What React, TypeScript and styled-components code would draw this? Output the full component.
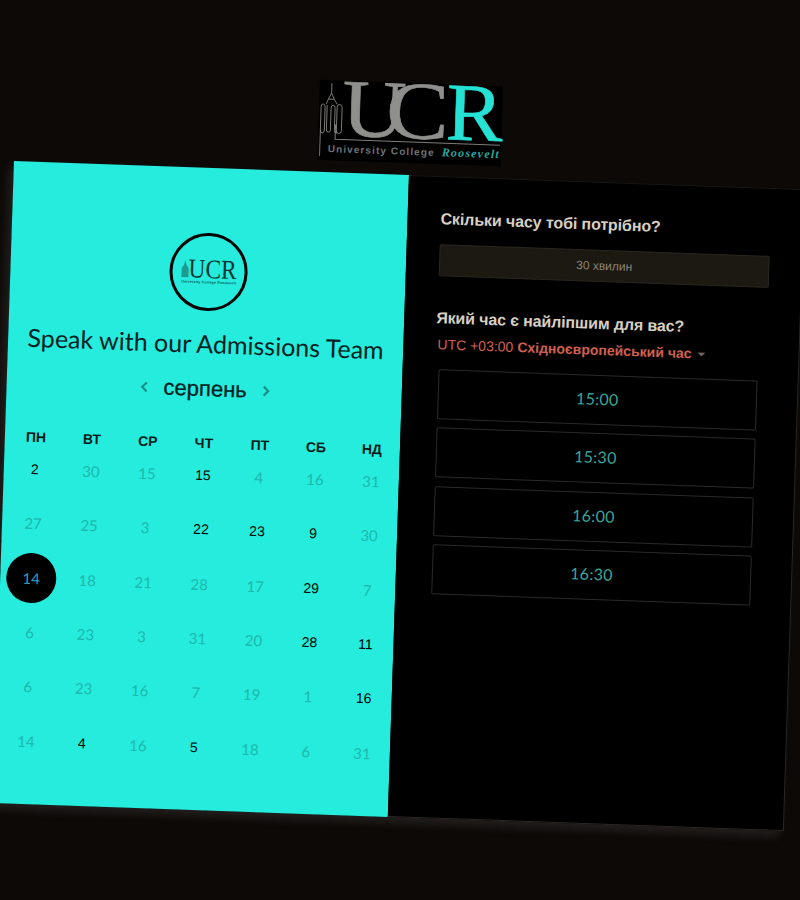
import React from 'react';
import styled, { createGlobalStyle } from 'styled-components';

const GlobalStyle = createGlobalStyle`
  html, body {
    margin: 0;
    padding: 0;
    width: 800px;
    height: 900px;
    overflow: hidden;
    background-color: #0c0906;
  }
`;

// the whole page is photographed slightly askew, so the sheer sits on the page wrapper
const Page = styled.div`
  width: 791px;
  padding-top: 161px;
  position: relative;
  transform-origin: 0 0;
  transform: matrix(1, 0.0355, -0.033, 1, 19.3, 0);
  font-family: 'Liberation Sans', Arial, sans-serif;
`;

const TopLogo = styled.svg`
  position: absolute;
  left: 303px;
  top: 69px;
  width: 183px;
  height: 80px;
  overflow: visible;
`;

const Card = styled.div`
  display: grid;
  grid-template-columns: 395px 396px;
  height: 642px;
  box-shadow: -5px 6px 10px rgba(150, 150, 155, 0.16);
`;

const LeftPanel = styled.section`
  background-color: #25ecdc;
  display: flex;
  flex-direction: column;
  align-items: center;
  padding-top: 65px;
  box-sizing: border-box;
  color: #000;
`;

const Badge = styled.div`
  width: 78px;
  height: 78px;
  box-sizing: border-box;
  border: 3px solid #050505;
  border-radius: 50%;
  display: flex;
  align-items: center;
  justify-content: center;
`;

const BadgeMark = styled.svg`
  width: 58px;
  height: 28px;
  overflow: visible;
`;

const Title = styled.h1`
  margin: 16px 0 0;
  font-family: Lato, 'Open Sans', sans-serif;
  font-weight: 400;
  font-size: 25px;
  line-height: 32px;
  white-space: nowrap;
  color: #06211f;
`;

const MonthRow = styled.div`
  margin: 17px 0 0 2px;
  display: flex;
  align-items: center;
  gap: 14px;
  height: 26px;
`;

const MonthName = styled.div`
  font-size: 22px;
  color: #03211f;
  -webkit-text-stroke: 0.3px #03211f;
`;

const Arrow = styled.svg`
  width: 10px;
  height: 12px;
  fill: none;
  stroke: #1a8f8a;
  stroke-width: 2.2;
`;

const Calendar = styled.div`
  margin: 36px 0 0 3px;
  width: 392px;
  display: grid;
  grid-template-columns: repeat(7, 56px);
  grid-template-rows: 10px repeat(6, 54.3px);
`;

const DayName = styled.div`
  line-height: 10px;
  text-align: center;
  font-size: 14px;
  font-weight: 700;
  color: #061a19;
`;

const Day = styled.div<{ $active?: boolean; $selected?: boolean }>`
  width: 50px;
  height: 50px;
  justify-self: center;
  align-self: center;
  display: flex;
  align-items: center;
  justify-content: center;
  border-radius: 50%;
  font-family: ${(p) => (p.$active ? "'Liberation Sans', Arial" : 'Lato, Roboto')}, sans-serif;
  font-size: ${(p) => (p.$active ? '14px' : '15px')};
  color: ${(p) => (p.$selected ? '#2a9fc0' : p.$active ? '#000' : '#1db8ad')};
  background-color: ${(p) => (p.$selected ? '#000' : 'transparent')};
`;

const RightPanel = styled.section`
  background-color: #000;
  box-sizing: border-box;
  padding: 32px 28px 0 33px;
  border-top: 1px solid #181715;
  border-right: 1px solid #2a2825;
  border-bottom: 1px solid #2a2825;
  display: flex;
  flex-direction: column;
`;

const Question = styled.h2`
  margin: 0;
  font-size: 16px;
  line-height: 20px;
  font-weight: 700;
  letter-spacing: -0.11px;
  color: #d8cfc2;
  white-space: nowrap;
`;

const Duration = styled.div`
  margin-top: 15px;
  height: 32px;
  width: 330px;
  box-sizing: border-box;
  border: 1px solid #2b2620;
  border-radius: 2px;
  background-color: #1c1812;
  color: #8d8579;
  font-size: 12px;
  display: flex;
  align-items: center;
  justify-content: center;
`;

const SecondQuestion = styled(Question)`
  margin-top: 32px;
  margin-left: -1px;
  letter-spacing: -0.14px;
`;

const Zone = styled.div`
  margin: 6px 0 0 1px;
  font-size: 14px;
  line-height: 20px;
  color: #d2604e;
  display: flex;
  align-items: center;
  gap: 4px;
  white-space: nowrap;
`;

const ZoneName = styled.b`
  font-weight: 700;
`;

const Caret = styled.span`
  margin-left: 2px;
  margin-top: 2px;
  border-left: 4px solid transparent;
  border-right: 4px solid transparent;
  border-top: 4px solid #6b655c;
`;

const Slots = styled.div`
  margin: 15px 0 0 3px;
  display: flex;
  flex-direction: column;
  gap: 8.4px;
`;

const Slot = styled.div`
  width: 319px;
  height: 50px;
  box-sizing: border-box;
  padding-bottom: 3px;
  border: 1px solid #2b2a28;
  border-radius: 2px;
  display: flex;
  align-items: center;
  justify-content: center;
  font-family: Lato, Roboto, sans-serif;
  font-size: 16px;
  letter-spacing: 0.3px;
  color: #3aa59b;
`;

type Cell = { n: number; active?: boolean; selected?: boolean };

const a = (n: number): Cell => ({ n, active: true });
const d = (n: number): Cell => ({ n });

const weekDays = ['ПН', 'ВТ', 'СР', 'ЧТ', 'ПТ', 'СБ', 'НД'];

const days: Cell[] = [
  a(2), d(30), d(15), a(15), d(4), d(16), d(31),
  d(27), d(25), d(3), a(22), a(23), a(9), d(30),
  { n: 14, selected: true }, d(18), d(21), d(28), d(17), a(29), d(7),
  d(6), d(23), d(3), d(31), d(20), a(28), a(11),
  d(6), d(23), d(16), d(7), d(19), d(1), a(16),
  d(14), a(4), d(16), a(5), d(18), d(6), d(31),
];

const slots = ['15:00', '15:30', '16:00', '16:30'];

const Tower: React.FC = () => (
  <g fill="none" stroke="#85857f" strokeWidth="0.9">
    <path d="M12 3V13M12 13L9 19L7 24M12 13L15 19L18 24M9 19H15" />
    <path d="M2 76V27Q2 24 4 24Q6 24 6 27V50Q6 53 4 53Q2 53 2 50" />
    <path d="M8 25V50Q8 52 10 52Q12 52 12 50V28Q12 25 14 25Q16 25 16 28V50Q16 53 18 53" />
    <path d="M18 53V27Q18 24 20.500 24Q23 24 23 27V50Q23 53 20.500 53Q18 53 18 50" />
    <path d="M17 44V59H182" stroke="#7c7c7a" strokeWidth="1" />
  </g>
);

const App: React.FC = () => (
  <>
    <GlobalStyle />
    <Page>
      <TopLogo viewBox="0 0 183 80">
        <rect width="183" height="80" fill="#000" />
        <Tower />
        <text x="23" y="55" fontFamily="'Liberation Serif', serif" fontSize="82" fill="#8f8f8c" stroke="#8f8f8c" strokeWidth="0.6" textLength="64" lengthAdjust="spacingAndGlyphs">U</text>
        <text x="67" y="55" fontFamily="'Liberation Serif', serif" fontSize="82" fill="#8f8f8c" stroke="#8f8f8c" strokeWidth="0.6" textLength="63" lengthAdjust="spacingAndGlyphs">C</text>
        <text x="127" y="55" fontFamily="'Liberation Serif', serif" fontSize="82" fill="#26e2d4" stroke="#26e2d4" strokeWidth="0.6" textLength="57" lengthAdjust="spacingAndGlyphs">R</text>
        <text x="10" y="72" fontFamily="'Liberation Sans', sans-serif" fontWeight="700" fontSize="10" fill="#6f7275" letterSpacing="1.1">University College</text>
        <text x="124" y="72" fontFamily="'Liberation Serif', serif" fontStyle="italic" fontWeight="700" fontSize="12" fill="#2aa79e" letterSpacing="1.2">Roosevelt</text>
      </TopLogo>
      <Card>
        <LeftPanel>
          <Badge>
            <BadgeMark viewBox="0 0 58 28">
              <path d="M2 20V11L4 8L5.500 3L7 8L9 11V20Z" fill="#1d9a92" />
              <text x="9" y="20" fontFamily="'Liberation Serif', serif" fontSize="27" fill="#0a3534" textLength="48" lengthAdjust="spacingAndGlyphs">UCR</text>
              <text x="2" y="25.500" fontFamily="'Liberation Sans', sans-serif" fontSize="3.600" fontWeight="700" fill="#0d5f5a" textLength="55">University College Roosevelt</text>
            </BadgeMark>
          </Badge>
          <Title>Speak with our Admissions Team</Title>
          <MonthRow>
            <Arrow viewBox="0 0 10 12"><path d="M7 1.500L2.500 6L7 10.500" /></Arrow>
            <MonthName>серпень</MonthName>
            <Arrow viewBox="0 0 10 12"><path d="M3 1.500L7.500 6L3 10.500" /></Arrow>
          </MonthRow>
          <Calendar>
            {weekDays.map((w) => (
              <DayName key={w}>{w}</DayName>
            ))}
            {days.map((c, i) => (
              <Day key={i} $active={c.active} $selected={c.selected}>{c.n}</Day>
            ))}
          </Calendar>
        </LeftPanel>
        <RightPanel>
          <Question>Скільки часу тобі потрібно?</Question>
          <Duration>30 хвилин</Duration>
          <SecondQuestion>Який час є найліпшим для вас?</SecondQuestion>
          <Zone>
            UTC +03:00 <ZoneName>Східноєвропейський час</ZoneName>
            <Caret />
          </Zone>
          <Slots>
            {slots.map((s) => (
              <Slot key={s}>{s}</Slot>
            ))}
          </Slots>
        </RightPanel>
      </Card>
    </Page>
  </>
);

export default App;
